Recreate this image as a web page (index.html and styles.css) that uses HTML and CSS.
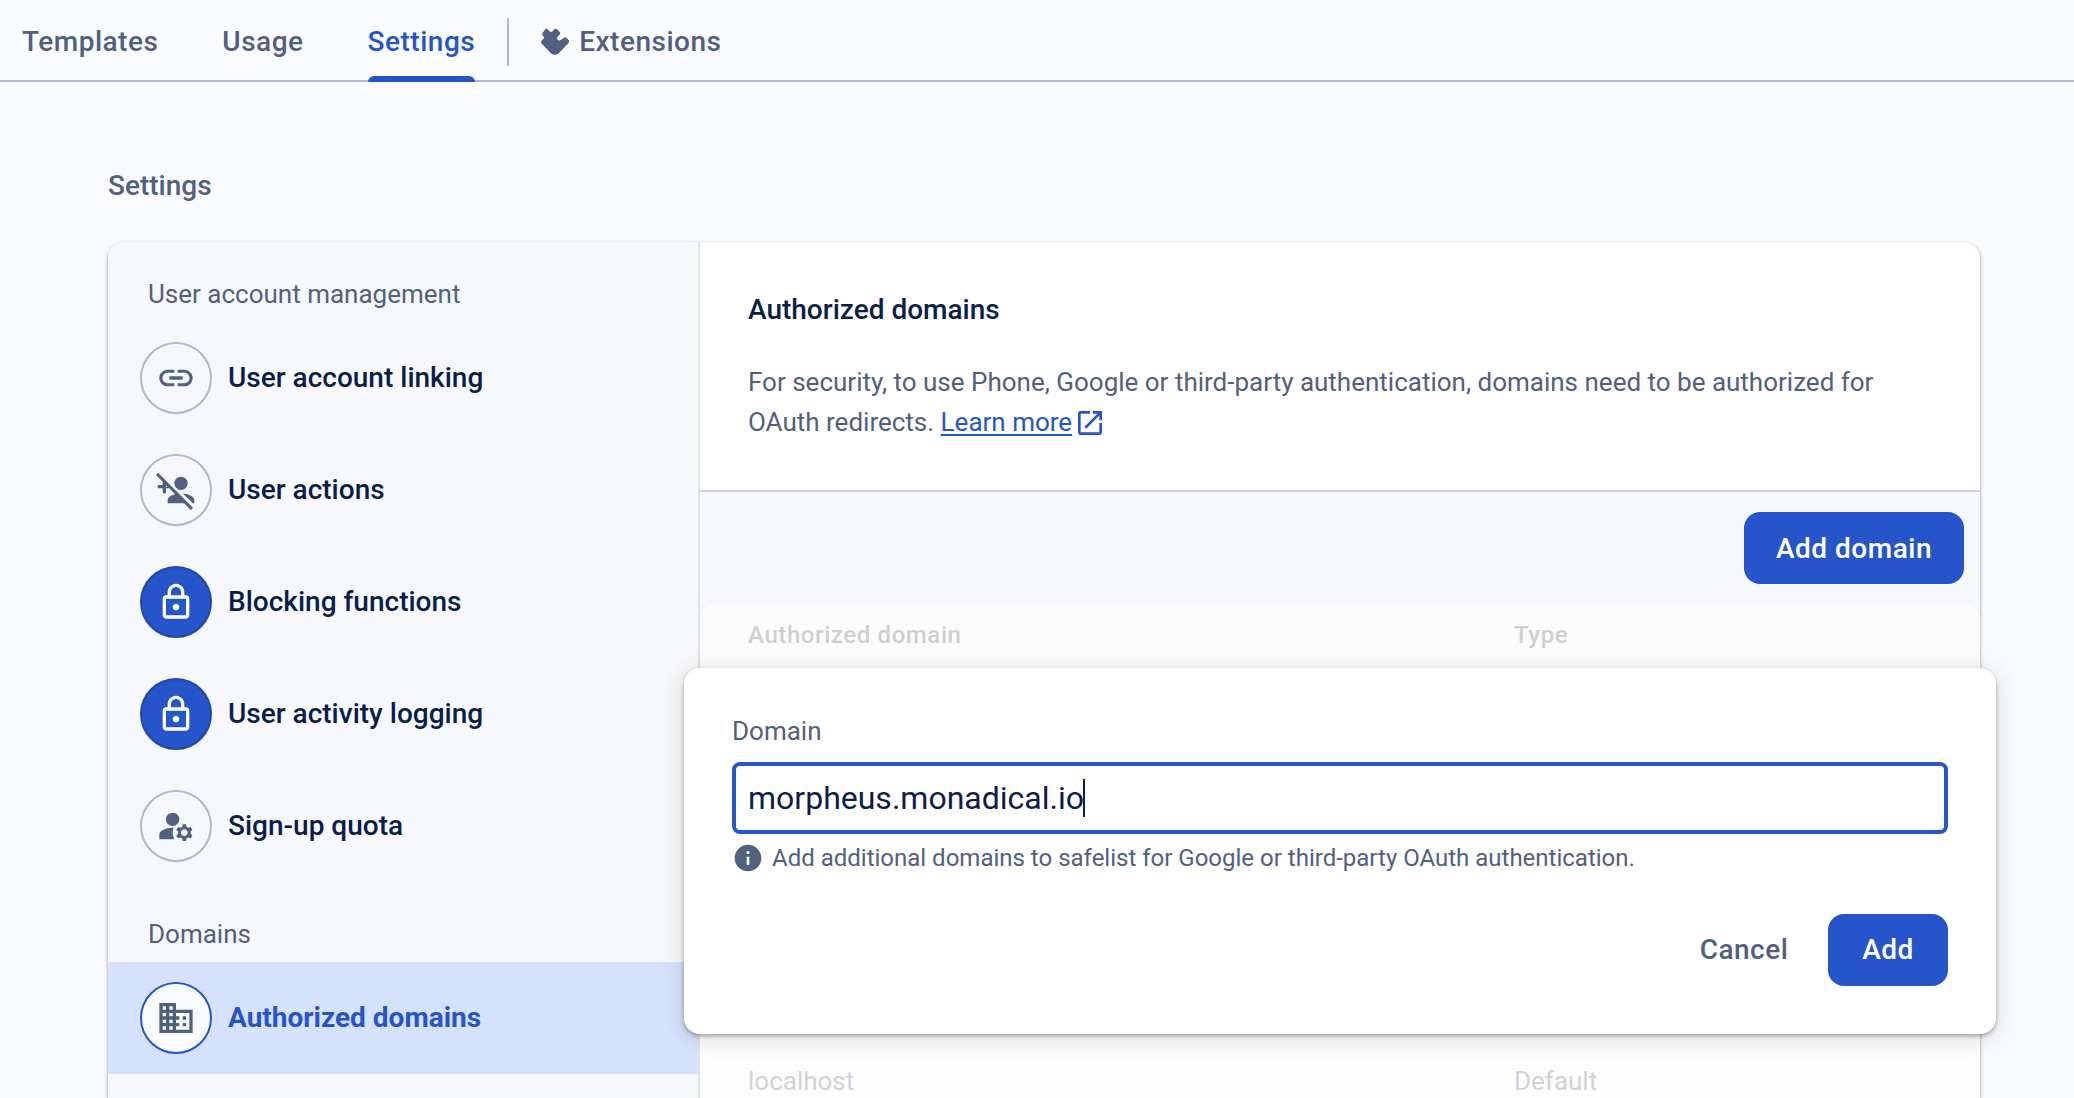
FILE: index.html
```html
<!DOCTYPE html>
<html lang="en">
<head>
<meta charset="utf-8">
<title>Authentication settings</title>
<link rel="stylesheet" href="styles.css">
</head>
<body>
<nav class="tabs">
  <a class="tab">Templates</a>
  <a class="tab">Usage</a>
  <a class="tab tab-active">Settings</a>
  <span class="tab-divider"></span>
  <a class="tab tab-ext">
    <svg class="ext-icon" viewBox="0 0 86 82"><path d="M2 39L9 31Q11 29 8 26Q1 20 5 14L12 5Q16 0 21 4L27 10Q31 13 35 10L40 4Q45 -1 50 4L57 11Q61 16 57 20L52 25Q47 31 51 36Q56 40 62 36L70 30Q75 26 79 30L85 37Q88 41 84 46L54 78Q43 86 31 78L2 47Q-1 43 2 39Z"/></svg>
    Extensions
  </a>
</nav>
<main class="page">
  <h1 class="page-title">Settings</h1>
  <section class="card">
    <aside class="sidebar">
      <h2 class="group">User account management</h2>
      <a class="item"><span class="badge"><svg class="icon" viewBox="0 0 24 24"><path d="M3.9 12c0-1.71 1.39-3.1 3.1-3.1h4V7H7c-2.76 0-5 2.24-5 5s2.24 5 5 5h4v-1.9H7c-1.71 0-3.1-1.39-3.1-3.1zM8 13h8v-2H8v2zm9-6h-4v1.9h4c1.71 0 3.1 1.39 3.1 3.1s-1.39 3.1-3.1 3.1h-4V17h4c2.76 0 5-2.24 5-5s-2.24-5-5-5z"/></svg></span><span class="item-label">User account linking</span></a>
      <a class="item"><span class="badge"><svg class="icon" viewBox="0 0 24 24"><circle cx="15" cy="8" r="4"/><path d="M23 20v-2c0-2.3-4.1-3.7-6.9-3.9l6 5.9h.9zM11.4 14.5C9.2 15.1 7 16.3 7 18v2h9.9l4 4 1.300-1.300-21-21L0 3l4 4v2H1v2h3v3h2v-3h2l3.400 3.500zM6 10v-.9l.9.9H6z"/></svg></span><span class="item-label">User actions</span></a>
      <a class="item"><span class="badge badge-solid"><svg class="icon" viewBox="0 0 24 24"><path d="M18 8h-1V6c0-2.760-2.240-5-5-5S7 3.240 7 6v2H6c-1.100 0-2 .9-2 2v10c0 1.100.9 2 2 2h12c1.100 0 2-.9 2-2V10c0-1.100-.9-2-2-2zM9 6c0-1.660 1.340-3 3-3s3 1.340 3 3v2H9V6zm9 14H6V10h12v10zm-6-3c1.100 0 2-.9 2-2s-.9-2-2-2-2 .9-2 2 .9 2 2 2z"/></svg></span><span class="item-label">Blocking functions</span></a>
      <a class="item"><span class="badge badge-solid"><svg class="icon" viewBox="0 0 24 24"><path d="M18 8h-1V6c0-2.760-2.240-5-5-5S7 3.240 7 6v2H6c-1.100 0-2 .9-2 2v10c0 1.100.9 2 2 2h12c1.100 0 2-.9 2-2V10c0-1.100-.9-2-2-2zM9 6c0-1.660 1.340-3 3-3s3 1.340 3 3v2H9V6zm9 14H6V10h12v10zm-6-3c1.100 0 2-.9 2-2s-.9-2-2-2-2 .9-2 2 .9 2 2 2z"/></svg></span><span class="item-label">User activity logging</span></a>
      <a class="item"><span class="badge"><svg class="icon" viewBox="0 0 24 24"><circle cx="10" cy="8" r="4"/><path d="M10.670 13.020C10.450 13.010 10.230 13 10 13c-2.420 0-4.680.67-6.610 1.820C2.510 15.340 2 16.320 2 17.350V20h9.260C10.470 18.870 10 17.490 10 16c0-1.070.25-2.070.67-2.980zM20.750 16c0-.22-.03-.42-.06-.63l1.140-1.010-1-1.730-1.450.49c-.32-.27-.68-.48-1.080-.63L18 11h-2l-.3 1.490c-.4.15-.76.36-1.080.63l-1.450-.49-1 1.730 1.140 1.010c-.03.210-.06.410-.06.63s.03.42.06.63l-1.140 1.010 1 1.730 1.450-.49c.32.27.68.48 1.080.63L16 21h2l.3-1.490c.4-.15.76-.36 1.080-.63l1.450.49 1-1.730-1.140-1.010c.03-.21.06-.41.06-.63zM17 18c-1.100 0-2-.9-2-2s.9-2 2-2 2 .9 2 2-.9 2-2 2z"/></svg></span><span class="item-label">Sign-up quota</span></a>
      <h2 class="group">Domains</h2>
      <a class="item item-active"><span class="badge"><svg class="icon" viewBox="0 0 24 24"><path d="M12 7V3H2v18h20V7H12zM6 19H4v-2h2v2zm0-4H4v-2h2v2zm0-4H4V9h2v2zm0-4H4V5h2v2zm4 12H8v-2h2v2zm0-4H8v-2h2v2zm0-4H8V9h2v2zm0-4H8V5h2v2zm10 12h-8v-2h2v-2h-2v-2h2v-2h-2V9h8v10zm-2-8h-2v2h2v-2zm0 4h-2v2h2v-2z"/></svg></span><span class="item-label">Authorized domains</span></a>
    </aside>
    <div class="content">
      <header class="intro">
        <h2 class="intro-title">Authorized domains</h2>
        <p class="intro-text">For security, to use Phone, Google or third-party authentication, domains need to be authorized for<br>OAuth redirects. <a class="link"><span class="link-label">Learn more</span><svg class="link-icon" viewBox="0 0 24 24"><path d="M19 19H5V5h7V3H5c-1.110 0-2 .9-2 2v14c0 1.100.89 2 2 2h14c1.100 0 2-.9 2-2v-7h-2v7zM14 3v2h3.590l-9.830 9.830 1.410 1.410L19 6.410V10h2V3h-7z"/></svg></a></p>
      </header>
      <div class="toolbar-wrap"><div class="toolbar"><button class="btn btn-main">Add domain</button></div></div>
      <div class="table">
        <div class="row row-head"><span>Authorized domain</span><span>Type</span></div>
        <div class="row row-body"><span>localhost</span><span>Default</span></div>
      </div>
    </div>
    <form class="dialog">
      <label class="label">Domain</label>
      <div class="input">morpheus.monadical.io<span class="caret"></span></div>
      <p class="hint"><svg class="hint-icon" viewBox="0 0 24 24"><path d="M12 2C6.480 2 2 6.480 2 12s4.480 10 10 10 10-4.480 10-10S17.520 2 12 2zm1 15h-2v-6h2v6zm0-8h-2V7h2v2z"/></svg>Add additional domains to safelist for Google or third-party OAuth authentication.</p>
      <div class="actions"><button class="btn btn-text" type="button">Cancel</button><button class="btn btn-add" type="button">Add</button></div>
    </form>
  </section>
</main>
</body>
</html>
```
FILE: styles.css
```css
* { box-sizing: border-box; }
html, body { height: 100%; overflow: hidden; }
body {
  margin: 0;
  background: #fafbff;
  color: #51607f;
  font-family: Roboto, "Liberation Sans", sans-serif;
  font-size: 26px;
  display: flex;
  flex-direction: column;
}
h1, h2, p { margin: 0; font-weight: 400; font-size: inherit; }
svg { display: block; fill: currentColor; flex: none; }

.tabs {
  flex: none;
  height: 82px;
  border-bottom: 2px solid #b0b8cb;
  padding-left: 22px;
  display: flex;
  align-items: flex-start;
}
.tab {
  height: 82px;
  line-height: 84px;
  font-size: 28px;
  font-weight: 500;
  letter-spacing: .5px;
  margin-right: 64px;
}
.tab-active {
  color: #2655c9;
  margin-right: 32px;
  position: relative;
}
.tab-active::after {
  content: "";
  position: absolute;
  left: 0;
  right: 0;
  bottom: 0;
  height: 6px;
  border-radius: 6px 6px 0 0;
  background: #2655c9;
}
.tab-divider { width: 2px; height: 48px; margin: 18px 32px 0 0; background: #b0b8cb; }
.tab-ext { display: flex; align-items: flex-start; gap: 10px; }
.ext-icon { width: 28px; height: 27px; margin-top: 28px; }

.page { flex: 1; min-height: 0; padding: 80px 94px 0 108px; display: flex; flex-direction: column; }
.page-title { flex: none; height: 80px; line-height: 48px; font-size: 28px; font-weight: 500; }
.card {
  position: relative;
  flex: 1;
  min-height: 0;
  display: flex;
  border-radius: 16px 16px 0 0;
  background: #fff;
  box-shadow: 0 2px 4px rgba(0, 0, 0, .27), 0 1px 3px rgba(0, 0, 0, .18);
}
.sidebar {
  width: 592px;
  flex: none;
  border-right: 2px solid #dfe3ea;
  border-radius: 16px 0 0 0;
  background: #f7f8fc;
}
.group { height: 80px; padding: 24px 0 0 40px; line-height: 56px; }
.item {
  height: 112px;
  padding-left: 32px;
  display: flex;
  align-items: center;
  gap: 16px;
  font-size: 28px;
  font-weight: 500;
  color: #0b1d49;
}
.item-label { padding-bottom: 2px; }
.badge {
  width: 72px;
  height: 72px;
  border: 2px solid #b0b8cb;
  border-radius: 50%;
  display: flex;
  align-items: center;
  justify-content: center;
  color: #51607f;
}
.badge-solid { background: #2655c9; border-color: #1f48a6; color: #fff; }
.item-active { background: #d6e1fb; color: #2655c9; font-weight: 700; }
.item-active .badge { border-color: #2655c9; background: #fafbff; }
.icon { width: 40px; height: 40px; }

.content { flex: 1; min-width: 0; display: flex; flex-direction: column; }
.intro { flex: none; height: 250px; border-bottom: 2px solid #ced2dc; padding: 48px; }
.intro-title { height: 72px; line-height: 40px; font-size: 28px; font-weight: 500; color: #0b1d49; }
.intro-text { line-height: 40px; white-space: nowrap; }
.link { color: #2655c9; }
.link-label { text-decoration: underline; text-decoration-thickness: 2px; text-underline-offset: 3px; }
.link-icon { display: inline-block; vertical-align: top; width: 32px; height: 32px; margin: 5px 0 -5px 2px; }
.toolbar-wrap { flex: none; background: #fff; }
.toolbar {
  height: 112px;
  padding: 20px 16px;
  border-radius: 0 8px 8px;
  background: #f7f8fc;
  display: flex;
  justify-content: flex-end;
}
.btn {
  height: 72px;
  padding: 0;
  width: 220px;
  border: 0;
  border-radius: 16px;
  background: #2655c9;
  color: #fff;
  font: 500 28px/72px Roboto, "Liberation Sans", sans-serif;
  letter-spacing: .5px;
}
.btn-main { line-height: 70px; padding-top: 2px; }
.table { flex: 1; min-height: 0; overflow: hidden; background: linear-gradient(#f7f8fc 16px, #fdfdfd 16px); }
.row { display: grid; grid-template-columns: 766px 1fr; padding-left: 48px; }
.row-head {
  height: 64px;
  line-height: 62px;
  border-radius: 16px 16px 0 0;
  background: #fcfcfc;
  color: #cfcfcf;
  font-size: 24px;
  font-weight: 500;
  letter-spacing: .6px;
}
.row-body { margin-top: 378px; height: 52px; line-height: 70px; color: #d0d2dc; }

.dialog {
  position: absolute;
  left: 576px;
  top: 426px;
  width: 1312px;
  height: 366px;
  padding: 40px 48px 48px;
  border-radius: 16px;
  background: #fff;
  box-shadow: 0 2px 4px rgba(0, 0, 0, .3), 0 4px 24px rgba(0, 0, 0, .14);
  display: flex;
  flex-direction: column;
}
.label { height: 54px; line-height: 46px; }
.input {
  height: 72px;
  padding-left: 12px;
  border: 4px solid #2655c9;
  border-radius: 8px;
  color: #0b1d49;
  font-size: 32px;
  display: flex;
  align-items: center;
}
.caret { width: 2px; height: 38px; margin-left: -1px; background: #0b1d49; }
.hint { margin-top: 8px; height: 32px; line-height: 32px; font-size: 24px; display: flex; gap: 8px; margin-bottom: auto; }
.hint-icon { width: 32px; height: 32px; }
.actions { display: flex; justify-content: flex-end; gap: 8px; }
.btn-text { width: 152px; background: none; color: #51607f; }
.btn-add { width: 120px; }
```
